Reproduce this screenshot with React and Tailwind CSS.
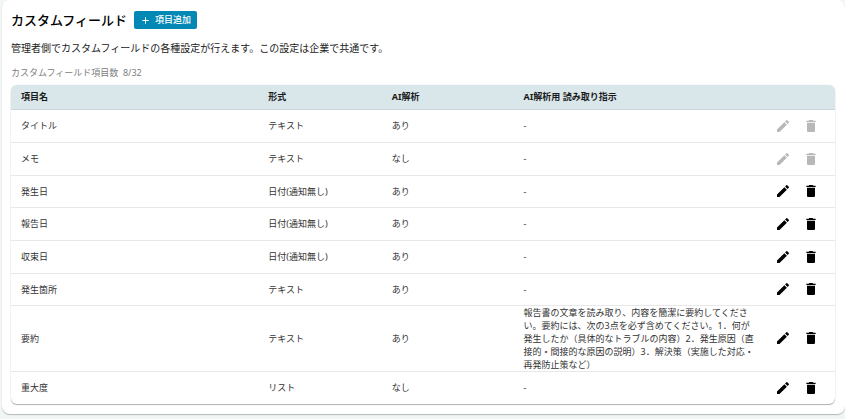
import React from "react";
import { MdAdd, MdDelete, MdEdit } from "react-icons/md";

const fields = [
  { name: "タイトル", type: "テキスト", ai: "あり", prompt: "-", locked: true },
  { name: "メモ", type: "テキスト", ai: "なし", prompt: "-", locked: true },
  { name: "発生日", type: "日付(通知無し)", ai: "あり", prompt: "-" },
  { name: "報告日", type: "日付(通知無し)", ai: "あり", prompt: "-" },
  { name: "収束日", type: "日付(通知無し)", ai: "あり", prompt: "-" },
  { name: "発生箇所", type: "テキスト", ai: "あり", prompt: "-" },
  {
    name: "要約",
    type: "テキスト",
    ai: "あり",
    prompt:
      "報告書の文章を読み取り、内容を簡潔に要約してください。要約には、次の3点を必ず含めてください。1．何が発生したか（具体的なトラブルの内容）2．発生原因（直接的・間接的な原因の説明）3．解決策（実施した対応・再発防止策など）",
  },
  { name: "重大度", type: "リスト", ai: "なし", prompt: "-" },
];

const IconButton = ({ label, disabled, children }) => (
  <button
    type="button"
    aria-label={label}
    disabled={disabled}
    className="text-black disabled:text-[#b8b8b8]"
  >
    {children}
  </button>
);

const FieldRow = ({ field }) => (
  <tr className="h-[33px] border-b border-[#e8e8e8] nth-[3n]:h-8 last:border-b-0">
    <td className="pl-[10px]">{field.name}</td>
    <td className="pl-[10px]">{field.type}</td>
    <td className="pl-[10px]">{field.ai}</td>
    <td className="pl-[10px]">
      <p className="max-w-[232px]">{field.prompt}</p>
    </td>
    <td className="pr-4">
      <div className="flex justify-end gap-3">
        <IconButton label={`${field.name}を編集`} disabled={field.locked}>
          <MdEdit size={16} />
        </IconButton>
        <IconButton label={`${field.name}を削除`} disabled={field.locked}>
          <MdDelete size={16} />
        </IconButton>
      </div>
    </td>
  </tr>
);

const App = () => {
  return (
    <div className="min-h-screen bg-[#f1f6f5] pb-1 pl-0.5 font-['Noto_Sans','Noto_Sans_CJK_JP',sans-serif]">
      <main className="rounded-lg bg-white pt-[11px] pr-[10px] pb-[10px] pl-[9px] shadow-[0_1px_1px_#b4bab9]">
        {/* Heading */}
        <div className="flex items-center gap-[7px]">
          <h1 className="text-[13px] leading-[18px] font-medium text-black">カスタムフィールド</h1>
          <button
            type="button"
            className="flex h-[18px] items-center gap-1 rounded-xs bg-[#0288b4] px-[6px] text-[9px] leading-[18px] font-medium text-white"
          >
            <MdAdd size={11} />
            項目追加
          </button>
        </div>
        <p className="mt-[11px] text-[10px] leading-4 text-[#222]">
          管理者側でカスタムフィールドの各種設定が行えます。この設定は企業で共通です。
        </p>
        <p className="mt-[10px] text-[9px] leading-[13px] text-[#808080]">
          カスタムフィールド項目数&nbsp; 8/32
        </p>

        {/* Field list */}
        <div className="mt-[6px] overflow-hidden rounded-md shadow-[0_1px_1px_#b0b0b0,0_0_1px_#ccc]">
          <table className="w-full table-fixed text-left text-[9px] leading-[13px] text-[#333]">
            <thead>
              <tr className="h-6 border-b border-[#c9d8dc] bg-[#d9e6ea] text-[#1a1a1a]">
                <th className="w-[30%] pl-[10px] font-bold">項目名</th>
                <th className="w-[15%] pl-[10px] font-bold">形式</th>
                <th className="w-[16%] pl-[10px] font-bold">AI解析</th>
                <th className="w-[30%] pl-[10px] font-bold">AI解析用 読み取り指示</th>
                <td className="w-[9%]"></td>
              </tr>
            </thead>
            <tbody>
              {fields.map((field) => (
                <FieldRow key={field.name} field={field} />
              ))}
            </tbody>
          </table>
        </div>
      </main>
    </div>
  );
};

export default App;
